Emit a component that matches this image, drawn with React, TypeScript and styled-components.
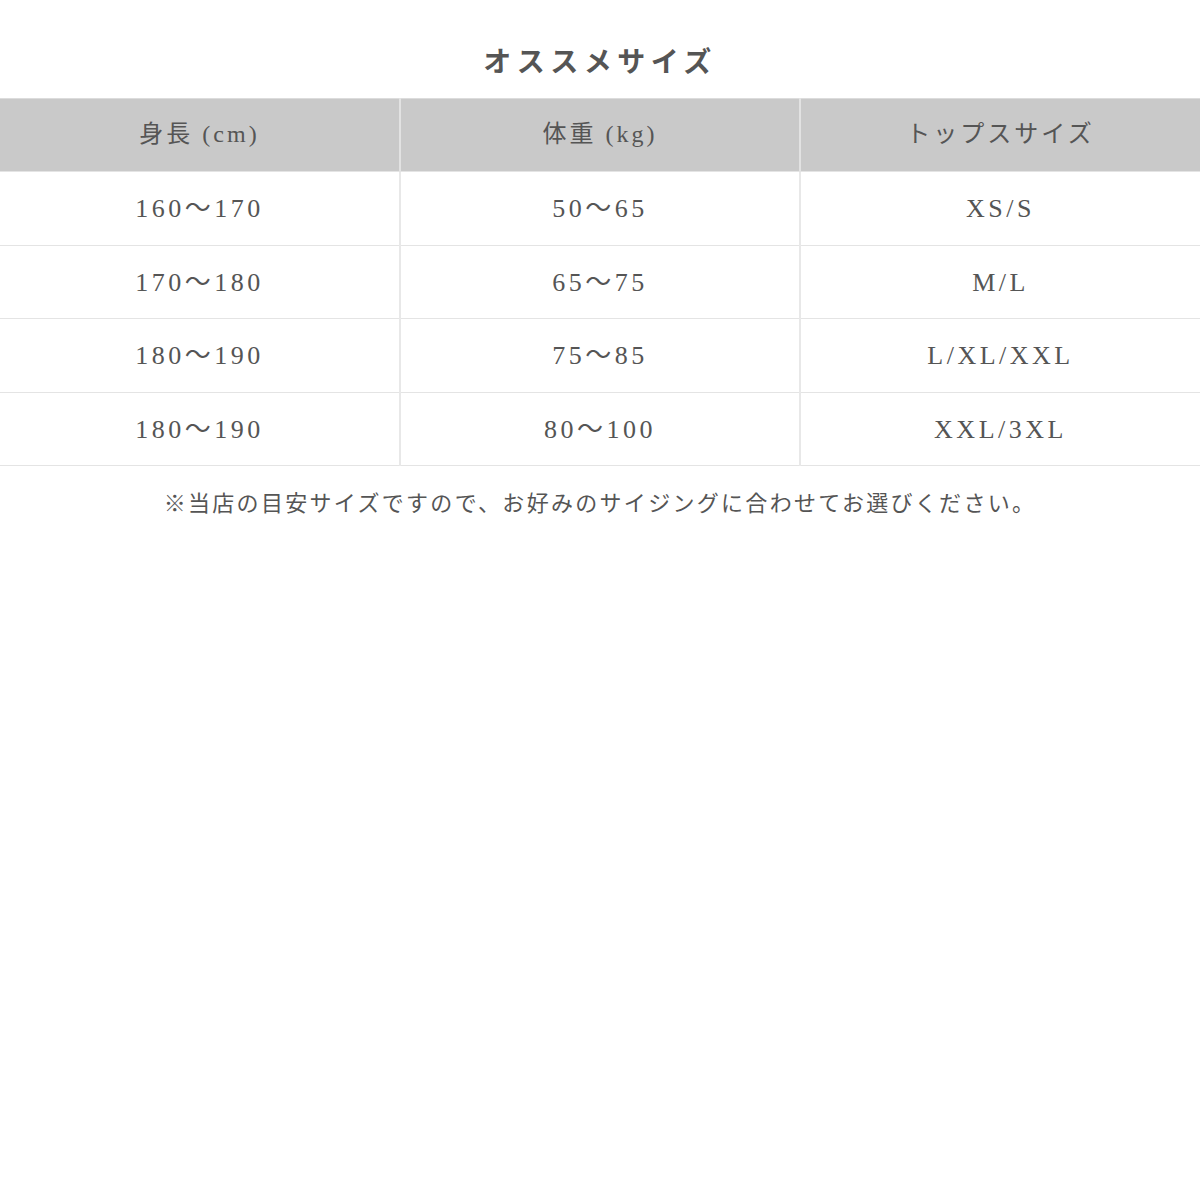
import React from 'react'
import styled, { createGlobalStyle } from 'styled-components'

const GlobalStyle = createGlobalStyle`
    html, body {
        margin: 0;
        padding: 0;
        background: #fff;
    }
    body {
        font-family: "Liberation Serif", "Noto Sans CJK JP", serif;
        color: #555;
    }
`

const StyledPage = styled.div`
    width: 1200px;
`

const StyledTitle = styled.h2`
    margin: 0;
    padding: 43px 0 15px;
    line-height: 40px;
    text-align: center;
    font-size: 28px;
    font-weight: 700;
    letter-spacing: 5.5px;
    color: #555;
`

const StyledTable = styled.table`
    width: 100%;
    border-collapse: collapse;
    table-layout: fixed;
    border-top: 1px solid #dcdcdc;
`

const StyledHeadCell = styled.th`
    height: 69px;
    padding: 0 0 3px;
    background: #c9c9c9;
    font-weight: 400;
    font-size: 24px;
    line-height: 1;
    letter-spacing: 3px;
    color: #555;
    border-left: 2px solid #e2e2e2;
    &:first-child {
        border-left: none;
    }
`

const StyledRow = styled.tr`
    border-bottom: 1px solid #e4e4e4;
`

const StyledCell = styled.td`
    height: 70.5px;
    padding: 2px 0 0;
    text-align: center;
    font-size: 26px;
    line-height: 1;
    letter-spacing: 3.5px;
    color: #555;
    border-left: 2px solid #e8e8e8;
    &:first-child {
        border-left: none;
    }
`

const StyledNote = styled.p`
    margin: 23px 0 0;
    line-height: 30px;
    text-align: center;
    font-size: 22px;
    letter-spacing: 2.3px;
    color: #555;
`

const headers = ['身長 (cm)', '体重 (kg)', 'トップスサイズ']

const rows = [
    ['160〜170', '50〜65', 'XS/S'],
    ['170〜180', '65〜75', 'M/L'],
    ['180〜190', '75〜85', 'L/XL/XXL'],
    ['180〜190', '80〜100', 'XXL/3XL'],
]

export default function App() {
    return (
        <StyledPage>
            <GlobalStyle />
            <StyledTitle>オススメサイズ</StyledTitle>
            <StyledTable>
                <thead>
                    <StyledRow>
                        {headers.map((h) => (
                            <StyledHeadCell key={h}>{h}</StyledHeadCell>
                        ))}
                    </StyledRow>
                </thead>
                <tbody>
                    {rows.map((r, i) => (
                        <StyledRow key={i}>
                            {r.map((c, j) => (
                                <StyledCell key={j}>{c}</StyledCell>
                            ))}
                        </StyledRow>
                    ))}
                </tbody>
            </StyledTable>
            <StyledNote>
                ※当店の目安サイズですので、お好みのサイジングに合わせてお選びください。
            </StyledNote>
        </StyledPage>
    )
}
